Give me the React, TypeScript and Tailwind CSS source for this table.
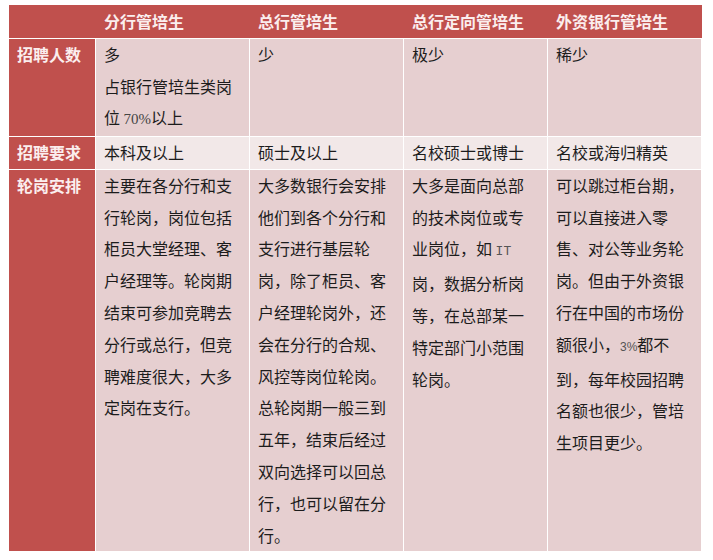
const cjk = "font-['Noto_Sans_CJK_SC','Noto_Sans',sans-serif]";

const heads = ["分行管培生", "总行管培生", "总行定向管培生", "外资银行管培生"];

function Lines({ lines }: { lines: React.ReactNode[] }) {
  return (
    <>
      {lines.map((l, i) => (
        <div key={i} className="whitespace-nowrap">{l}</div>
      ))}
    </>
  );
}

const rotation: React.ReactNode[][] = [
  [
    "主要在各分行和支",
    "行轮岗，岗位包括",
    "柜员大堂经理、客",
    "户经理等。轮岗期",
    "结束可参加竞聘去",
    "分行或总行，但竞",
    "聘难度很大，大多",
    "定岗在支行。",
  ],
  [
    "大多数银行会安排",
    "他们到各个分行和",
    "支行进行基层轮",
    "岗，除了柜员、客",
    "户经理轮岗外，还",
    "会在分行的合规、",
    "风控等岗位轮岗。",
    "总轮岗期一般三到",
    "五年，结束后经过",
    "双向选择可以回总",
    "行，也可以留在分",
    "行。",
  ],
  [
    "大多是面向总部",
    "的技术岗位或专",
    <>业岗位，如 <span className="font-['Liberation_Mono',monospace] text-[13px] text-[#555]">IT</span></>,
    "岗，数据分析岗",
    "等，在总部某一",
    "特定部门小范围",
    "轮岗。",
  ],
  [
    "可以跳过柜台期，",
    "可以直接进入零",
    "售、对公等业务轮",
    "岗。但由于外资银",
    "行在中国的市场份",
    <>额很小，<span className="font-['Liberation_Sans',sans-serif] text-[12px] text-[#555]">3%</span>都不</>,
    "到，每年校园招聘",
    "名额也很少，管培",
    "生项目更少。",
  ],
];

const label = "bg-[#c0504d] px-2 font-bold text-[#fbeeee]";
const cell = "bg-[#e6cfd0] pl-2 text-[#1c1c1c]";
const lite = "bg-[#f2e8e8] pl-2 text-[#1c1c1c]";

export default function App() {
  return (
    <div className={`min-h-[560px] w-[713px] bg-white pl-[9px] pt-[5px] text-[16px] ${cjk}`}>
      <div className="w-[693px]">
        {/* header */}
        <div className="grid h-[33px] grid-cols-[86px_153px_153px_143px_153px] gap-x-px bg-[#c0504d] leading-[32px] font-bold text-[#fbeeee]">
          <div />
          {heads.map((h) => (
            <div key={h} className="pl-2 whitespace-nowrap">{h}</div>
          ))}
        </div>

        <div className="grid grid-cols-[86px_153px_153px_143px_153px] gap-px bg-white pt-px leading-[31.7px]">
          <div className={label}>招聘人数</div>
          <div className={cell}>
            <Lines
              lines={[
                "多",
                "占银行管培生类岗",
                <>位 <span className="font-['Liberation_Serif',serif] text-[15px] text-[#444]">70%</span>以上</>,
              ]}
            />
          </div>
          <div className={cell}>少</div>
          <div className={cell}>极少</div>
          <div className={cell}>稀少</div>

          <div className={label}>招聘要求</div>
          <div className={lite}>本科及以上</div>
          <div className={lite}>硕士及以上</div>
          <div className={lite}>名校硕士或博士</div>
          <div className={lite}>名校或海归精英</div>

          <div className={`${label} leading-[31.8px]`}>轮岗安排</div>
          {rotation.map((r, i) => (
            <div key={i} className={`${cell} leading-[31.8px]`}>
              <Lines lines={r} />
            </div>
          ))}
        </div>
      </div>
    </div>
  );
}
